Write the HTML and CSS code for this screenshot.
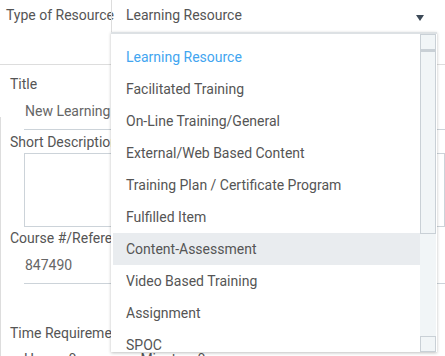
FILE: index.html
```html
<!DOCTYPE html>
<html>
<head>
<meta charset="utf-8">
<link rel="stylesheet" href="styles.css">
</head>
<body>
<div class="page">
  <div class="type-row">
    <div class="type-label">Type of Resource</div>
    <div class="select">
      <span class="select-value">Learning Resource</span>
      <span class="caret"></span>
    </div>
  </div>
  <div class="spacer"></div>
  <div class="form">
    <div class="field-label first">Title</div>
    <div class="input">New Learning Resource</div>
    <div class="field-label">Short Description</div>
    <div class="textarea"></div>
    <div class="field-label">Course #/Reference</div>
    <div class="input">847490</div>
    <div class="field-label time">Time Requirement</div>
    <div class="time-row"><span>Hours: 0</span><span>Minutes: 0</span></div>
  </div>

  <div class="dropdown">
    <ul class="options">
      <li class="selected">Learning Resource</li>
      <li>Facilitated Training</li>
      <li>On-Line Training/General</li>
      <li>External/Web Based Content</li>
      <li>Training Plan / Certificate Program</li>
      <li>Fulfilled Item</li>
      <li class="hover">Content-Assessment</li>
      <li>Video Based Training</li>
      <li>Assignment</li>
      <li>SPOC</li>
    </ul>
    <div class="scrollbar">
      <div class="sb-btn"></div>
      <div class="sb-thumb"></div>
      <div class="sb-fill"></div>
      <div class="sb-btn"></div>
    </div>
  </div>
</div>
</body>
</html>
```
FILE: styles.css
```css
html, body {
  margin: 0;
  padding: 0;
  background: #fff;
}
body {
  font-family: Roboto, "Noto Sans", sans-serif;
  font-size: 14px;
  color: #555;
  overflow: hidden;
  width: 445px;
  height: 356px;
}
.page {
  position: relative;
  width: 445px;
  height: 356px;
  overflow: hidden;
}
.type-row {
  display: flex;
  height: 33px;
}
.type-label {
  width: 105px;
  padding-left: 6px;
  line-height: 30px;
  white-space: nowrap;
}
.select {
  width: 325px;
  border-left: 1px solid #ddd;
  display: flex;
  align-items: center;
  justify-content: space-between;
  padding: 0 12px 0 14px;
  box-sizing: border-box;
  height: 33px;
}
.select-value {
  font-size: 14px;
  margin-top: -3px;
}
.caret {
  width: 0;
  height: 0;
  border-left: 4px solid transparent;
  border-right: 4px solid transparent;
  border-top: 6px solid #3d4a57;
  margin-top: 2px;
}
.spacer {
  height: 31px;
  border-bottom: 1px solid #ddd;
}
.form {
  position: relative;
  padding-left: 10px;
  height: 300px;
}
.form::before {
  content: "";
  position: absolute;
  left: 0;
  top: 42px;
  bottom: 0;
  border-left: 1px solid #ddd;
}
.field-label {
  line-height: 18px;
  white-space: nowrap;
}
.field-label.first {
  margin-top: 10px;
}
.input {
  margin-left: 14px;
  padding: 9px 0 9px 1px;
  line-height: 18px;
  border-bottom: 1px solid #ccd3d9;
  margin-bottom: 3px;
  color: #666;
  white-space: nowrap;
}
.textarea {
  margin-left: 14px;
  margin-top: 2px;
  height: 72px;
  border: 1px solid #ccd3d9;
  margin-bottom: 2px;
}
.field-label.time {
  margin-top: 40px;
}
.time-row {
  margin-left: 14px;
  margin-top: 8px;
  display: flex;
  gap: 64px;
  line-height: 18px;
}
.dropdown {
  position: absolute;
  left: 111px;
  top: 32px;
  width: 326px;
  height: 320px;
  background: #fff;
  border-top: 2px solid #dde1e4;
  box-shadow: 0 1px 3px rgba(0,0,0,0.25);
  display: flex;
  box-sizing: border-box;
  overflow: hidden;
}
.options {
  list-style: none;
  margin: 0;
  padding: 7px 0 0 2px;
  flex: 1;
}
.options li {
  height: 32px;
  line-height: 32px;
  padding-left: 13px;
  white-space: nowrap;
}
.options li.selected {
  color: #42a5f0;
}
.options li.hover {
  background: #e9ecef;
}
.scrollbar {
  width: 16px;
  margin-right: 1px;
  background: #f1f5f7;
  display: flex;
  flex-direction: column;
}
.sb-btn {
  height: 16px;
  border: 1px solid #c9d0d6;
  box-sizing: border-box;
}
.sb-thumb {
  height: 184px;
  border: 1px solid #c9d0d6;
  border-top-width: 2px;
  box-sizing: border-box;
}
.sb-fill {
  flex: 1;
}
```
